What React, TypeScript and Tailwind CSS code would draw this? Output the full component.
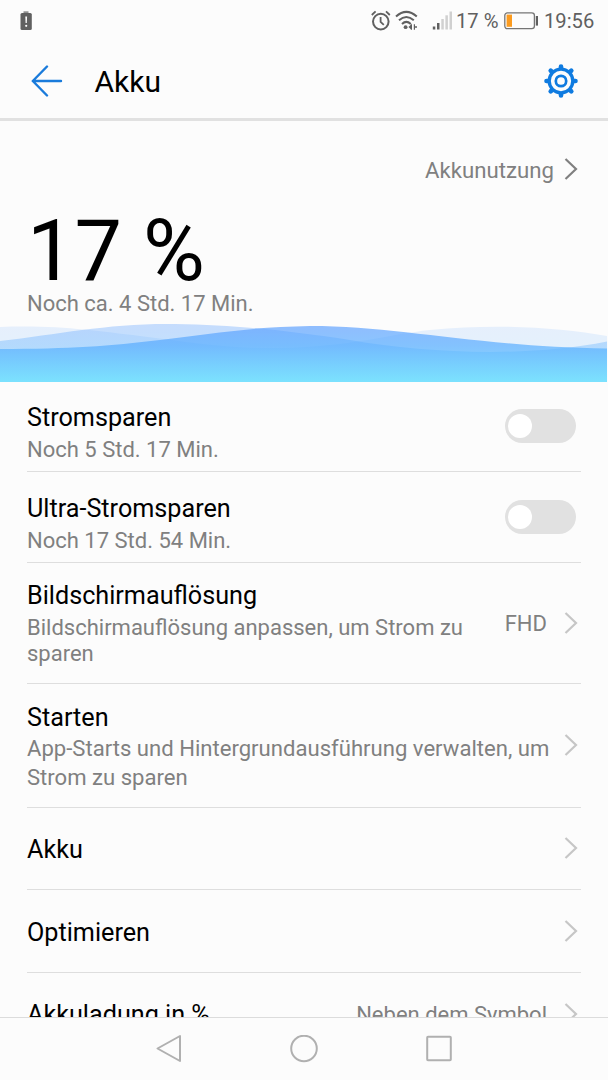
import React from 'react';

interface ChevronProps {
  className: string;
}

const Chevron: React.FC<ChevronProps> = ({ className }) => (
  <svg className={className} width="14" height="24" viewBox="0 0 14 24" fill="none" stroke="currentColor">
    <path d="M1.5 2 L12 12 L1.5 22" strokeWidth="2.2" />
  </svg>
);

const StatusBar: React.FC = () => (
  <div className="flex h-[42px] shrink-0 items-center pl-5 pr-[14px] text-[#606060]">
    <svg width="12" height="20" viewBox="0 0 12 20" fill="currentColor">
      <path d="M3.5 0.5h5v1.2h-5z" />
      <rect x="0.5" y="2" width="11.3" height="17" rx="1.5" />
      <path d="M5.3 5.5h1.8l-.3 6.5H5.6z" fill="#fcfcfc" />
      <circle cx="6.2" cy="14.8" r="1.1" fill="#fcfcfc" />
    </svg>
    <div className="ml-auto flex items-center">
      <svg width="20" height="22" viewBox="0 0 20 22" fill="none" stroke="currentColor" strokeWidth="2">
        <circle cx="9.8" cy="11.6" r="7.8" />
        <path d="M9.6 7v4.8l3.2 3" strokeWidth="1.8" />
        <path d="M0.8 5 L4.6 1.4 M15 1.4 L18.8 5" strokeWidth="1.8" />
      </svg>
      <svg className="ml-1" width="24" height="22" viewBox="0 0 24 22" fill="none" stroke="currentColor" strokeWidth="2">
        <path d="M1 6.5 Q11.3 -2.7 21.8 6.5" />
        <path d="M4 10.3 Q11.3 3.6 18.8 10.3" />
        <path d="M7 14 Q11.3 9.8 15.8 14" />
        <circle cx="10.6" cy="17.2" r="1.9" fill="currentColor" stroke="none" />
        <path d="M13.4 17l2.8-2.4v4.8z M22 16.2h-2v1.6h2z" fill="currentColor" stroke="none" />
        <path d="M16.4 14.2v5.6 M19.4 14.2v5.6" strokeWidth="1.2" />
      </svg>
      <svg className="ml-[13px]" width="21" height="20" viewBox="0 0 21 20">
        <rect x="0.8" y="15.5" width="2.5" height="3" fill="#606060" />
        <rect x="5" y="12" width="2.5" height="6.5" fill="#606060" />
        <rect x="9.3" y="8" width="2.5" height="10.5" fill="#d0d0d0" />
        <rect x="13.4" y="4.3" width="2.5" height="14.2" fill="#d0d0d0" />
        <rect x="17.5" y="0.5" width="2.5" height="18" fill="#d0d0d0" />
      </svg>
      <span className="ml-[3px] w-[47px] whitespace-nowrap text-[20.2px]">17 %</span>
      <svg className="ml-px" width="36" height="18" viewBox="0 0 36 18">
        <rect x="0.8" y="0.9" width="29.6" height="15.8" rx="2.6" fill="none" stroke="#757575" strokeWidth="1.3" />
        <rect x="2.6" y="2.6" width="5.4" height="12.2" fill="#fb9b1f" />
        <rect x="31.8" y="4" width="2.2" height="9.6" fill="#606060" />
      </svg>
      <span className="ml-[4px] w-[50px] whitespace-nowrap text-[20.2px]">19:56</span>
    </div>
  </div>
);

const GearIcon: React.FC = () => (
  <svg width="34" height="34" viewBox="0 0 34 34" fill="none" stroke="#0f7be0">
    <g strokeWidth="4.6" strokeLinecap="round">
      <path d="M17 2.5v2 M17 29.5v2 M2.5 17h2 M29.5 17h2" />
      <path d="M6.7 6.7l1.4 1.4 M25.9 25.9l1.4 1.4 M6.7 27.3l1.4-1.4 M25.9 8.1l1.4-1.4" />
    </g>
    <circle cx="17" cy="17" r="11.8" strokeWidth="3.3" fill="#fcfcfc" />
    <circle cx="17" cy="17" r="5.2" strokeWidth="2.7" />
  </svg>
);

const AppBar: React.FC = () => (
  <header className="flex h-[79px] shrink-0 items-center border-b-[3px] border-[#e1e1e1] pl-[31px] pr-[30px] pt-px">
    <svg width="32" height="32" viewBox="0 0 32 32" fill="none" stroke="#1a7bdb" strokeWidth="2.4" strokeLinecap="round" strokeLinejoin="round">
      <path d="M16 1.5 L1.8 16 L16 30.5 M1.8 16 H30" />
    </svg>
    <h1 className="ml-[31.5px] mt-[3px] text-[30px] leading-none text-black">Akku</h1>
    <div className="ml-auto pt-px">
      <GearIcon />
    </div>
  </header>
);

const Waves: React.FC = () => (
  <svg className="block" width="607" height="60" viewBox="0 322 607 60">
    <defs>
      <linearGradient id="water" gradientUnits="userSpaceOnUse" x1="0" y1="326" x2="0" y2="382">
        <stop offset="0" stopColor="#5c9fff" />
        <stop offset="0.35" stopColor="#55acff" />
        <stop offset="1" stopColor="#5fdcff" />
      </linearGradient>
    </defs>
    <path
      fill="url(#water)"
      opacity="0.14"
      d="M0 327 C60 325 95 331 140 336 C190 342 225 349 280 348 C350 347 390 334 430 330 C500 323 560 328 607 336 V382 H0Z"
    />
    <path
      fill="url(#water)"
      opacity="0.34"
      d="M0 341 C60 334 110 323 175 324 C240 325 290 331 350 340 C430 354 530 357 607 341.5 V382 H0Z"
    />
    <path
      fill="url(#water)"
      opacity="0.68"
      d="M0 349 C70 349 110 346 160 340 C210 334 250 327 310 326 C400 326 480 347 607 348.5 V382 H0Z"
    />
  </svg>
);

const BatterySummary: React.FC = () => (
  <section className="flex h-[261px] shrink-0 flex-col">
    <div className="flex items-center justify-end pr-[30px] pt-[34px] text-[#808080]">
      <span className="text-[22.2px] leading-[30px]">Akkunutzung</span>
      <Chevron className="ml-[10px] -mt-[2px]" />
    </div>
    <div className="mt-[28px] pl-[27px] text-[84.5px] leading-[78px] text-black">17 %</div>
    <div className="pl-[27px] text-[22px] leading-[26px] text-[#808080]">Noch ca. 4 Std. 17 Min.</div>
    <div className="mt-auto">
      <Waves />
    </div>
  </section>
);

const Toggle: React.FC = () => (
  <button type="button" aria-label="Umschalten" className="mr-[5px] flex h-[34px] w-[71px] items-center rounded-full bg-[#e1e1e1] pl-[3px]">
    <span className="size-6 rounded-full bg-white" />
  </button>
);

interface SettingRowProps {
  title: string;
  className: string;
  children?: React.ReactNode;
  control: React.ReactNode;
}

const SettingRow: React.FC<SettingRowProps> = ({ title, className, children, control }) => (
  <div className={`mx-[27px] flex shrink-0 border-b border-[#dedede] ${className}`}>
    <div className="min-w-0 flex-1 whitespace-nowrap">
      <div className="text-[25.2px] leading-[30px] text-black">{title}</div>
      {children}
    </div>
    {control}
  </div>
);

const App: React.FC = () => {
  return (
    <div className="flex h-[1080px] w-[608px] flex-col overflow-hidden bg-[#fcfcfc] font-['Roboto',sans-serif]">
      <StatusBar />
      <AppBar />
      <BatterySummary />

      <main className="flex min-h-0 flex-1 flex-col overflow-hidden">
        <SettingRow title="Stromsparen" className="h-[90px] pt-[21px]" control={<div className="pt-[6px]"><Toggle /></div>}>
          <div className="mt-[4px] text-[22px] leading-[26px] text-[#808080]">Noch 5 Std. 17 Min.</div>
        </SettingRow>
        <SettingRow title="Ultra-Stromsparen" className="h-[91px] pt-[22px]" control={<div className="pt-[6px]"><Toggle /></div>}>
          <div className="mt-[4px] text-[22px] leading-[26px] text-[#808080]">Noch 17 Std. 54 Min.</div>
        </SettingRow>
        <SettingRow
          title="Bildschirmauflösung"
          className="h-[121px] pt-[18px]"
          control={
            <div className="flex h-[84px] items-center pr-[3px]">
              <span className="mr-[17px] text-[22px] text-[#808080]">FHD</span>
              <Chevron className="-mt-px text-[#c6c6c6]" />
            </div>
          }
        >
          <div className="mt-[4px] text-[22px] leading-[26px] text-[#808080]">
            Bildschirmauflösung anpassen, um Strom zu
            <br />
            sparen
          </div>
        </SettingRow>
        <SettingRow
          title="Starten"
          className="h-[124px] pt-[19px]"
          control={
            <div className="flex h-[84px] items-center pr-[3px]">
              <Chevron className="text-[#c6c6c6]" />
            </div>
          }
        >
          <div className="mt-px text-[22.1px] leading-[29px] text-[#808080]">
            App-Starts und Hintergrundausführung verwalten, um
            <br />
            Strom zu sparen
          </div>
        </SettingRow>
        <SettingRow
          title="Akku"
          className="h-[82px] items-center pt-[2px]"
          control={<Chevron className="mr-[3px] -mt-[3px] text-[#c6c6c6]" />}
        />
        <SettingRow
          title="Optimieren"
          className="h-[83px] items-center pt-[3px]"
          control={<Chevron className="mr-[3px] -mt-[3px] text-[#c6c6c6]" />}
        />
        <SettingRow
          title="Akkuladung in %"
          className="h-[83px] items-center pt-[2px]"
          control={
            <div className="flex items-center pr-[3px]">
              <span className="-mt-[2px] mr-[17px] text-[22px] text-[#808080]">Neben dem Symbol</span>
              <Chevron className="-mt-[3px] text-[#c6c6c6]" />
            </div>
          }
        />
      </main>

      <nav className="flex h-[63px] shrink-0 items-center justify-center gap-[107px] border-t border-[#dcdcdc]">
        <svg width="28" height="30" viewBox="0 0 28 30" fill="none" stroke="#b0b0b0" strokeWidth="2" strokeLinejoin="round">
          <path d="M25 2 V27 L2.5 14.5Z" />
        </svg>
        <svg width="28" height="28" viewBox="0 0 28 28" fill="none" stroke="#b0b0b0" strokeWidth="2">
          <circle cx="14" cy="13.5" r="12.8" />
        </svg>
        <svg width="28" height="28" viewBox="0 0 28 28" fill="none" stroke="#b0b0b0" strokeWidth="2">
          <rect x="2.2" y="1.7" width="23.6" height="23.6" rx="0.8" />
        </svg>
      </nav>
    </div>
  );
};

export default App;
